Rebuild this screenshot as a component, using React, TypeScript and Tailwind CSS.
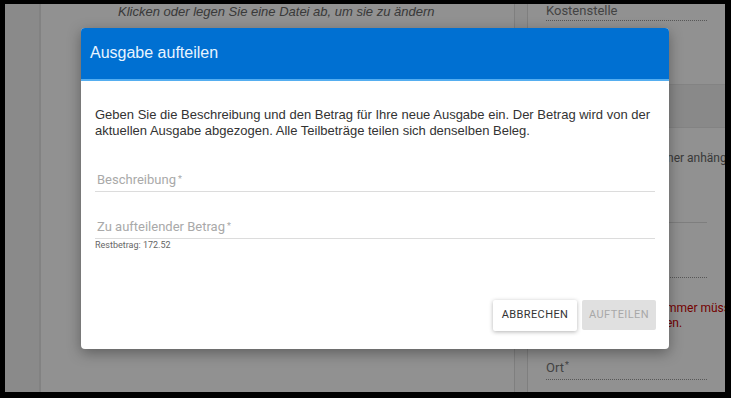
import React from 'react';

const sans = { fontFamily: '"Liberation Sans", Arial, sans-serif' };

const Field: React.FC<{ label: string; hint?: string }> = ({ label, hint }) => (
  <div className="flex flex-col">
    <div className="h-[21px] flex items-end pb-[2px] pl-[2px] border-b border-[#dcdcdc] text-[13px] text-[#a9a9a9] font-['Roboto',sans-serif]">
      <span>{label}</span>
      <span className="text-[9px] self-start mt-[2px] ml-[2px]">*</span>
    </div>
    {hint && <div className="text-[9px] text-[#666] mt-[2px] leading-none font-['Roboto',sans-serif]">{hint}</div>}
  </div>
);

export default function App() {
  return (
    <div className="w-[731px] h-[398px] bg-black pl-[5px] pt-[4px] pr-[6px] pb-[6px] overflow-hidden" style={sans}>
      <div className="relative w-full h-full bg-[#f7f7f7] flex overflow-hidden">
        {/* underlying page */}
        <div className="w-[36px] shrink-0 bg-[#f2f2f2] border-r-2 border-[#e4e4e4]" />
        <div className="w-[474px] shrink-0 bg-white border-r border-[#e0e0e0] pl-[77px] pt-[1px]">
          <div className="text-[13px] italic text-[#666] leading-none">Klicken oder legen Sie eine Datei ab, um sie zu ändern</div>
        </div>
        <div className="w-[13px] shrink-0 bg-[#fafafa] border-r border-[#e0e0e0]" />
        <div className="flex-1 min-w-0 overflow-hidden bg-white flex flex-col font-['Roboto',sans-serif]">
          <div className="mx-[18px] pb-[3px] text-[13px] text-[#777] border-b border-dotted border-[#999] leading-none">Kostenstelle</div>
          <div className="mt-[63px] h-[44px] bg-[#f1f1f1] border-y border-[#e6e6e6]" />
          <div className="mt-[21px] pl-[139px] text-[12px] text-[#666] whitespace-nowrap">ner anhängen</div>
          <div className="mt-[55px] mx-[18px] border-b border-[#ddd]" />
          <div className="mt-[54px] mx-[18px] border-b border-dotted border-[#999]" />
          <div className="mt-[23px] pl-[138px] text-[12px] text-[#c00] leading-[15px] whitespace-nowrap">
            <div>mmer müssen</div>
            <div>en.</div>
          </div>
          <div className="mt-[30px] mx-[18px] pb-[5px] text-[13px] text-[#777] border-b border-dotted border-[#999] leading-none">
            Ort<span className="text-[9px] align-top ml-[1px]">*</span>
          </div>
        </div>

        {/* overlay */}
        <div className="absolute inset-0 bg-black/[0.43]" />

        {/* dialog */}
        <div className="absolute left-[76px] top-[24px] w-[588px] h-[321px] bg-white rounded-[4px] shadow-[0_4px_14px_rgba(0,0,0,0.35)] flex flex-col overflow-hidden">
          <div className="h-[53px] shrink-0 bg-[#0070d2] border-b-2 border-[#55aef0] flex items-center pl-[9px] pb-[1px]">
            <span className="text-[16px] text-[#e8f4ff]">Ausgabe aufteilen</span>
          </div>
          <div className="flex-1 flex flex-col px-[14px] pt-[26px]">
            <p className="text-[13px] leading-[16px] text-[#333] whitespace-nowrap">
              Geben Sie die Beschreibung und den Betrag für Ihre neue Ausgabe ein. Der Betrag wird von der
              <br />
              aktuellen Ausgabe abgezogen. Alle Teilbeträge teilen sich denselben Beleg.
            </p>
            <div className="mt-[32px] w-[560px]">
              <Field label="Beschreibung" />
            </div>
            <div className="mt-[26px] w-[560px]">
              <Field label="Zu aufteilender Betrag" hint="Restbetrag: 172.52" />
            </div>
            <div className="flex-1" />
            <div className="flex justify-end gap-[5px] mb-[18px] font-['Roboto',sans-serif]">
              <button className="h-[31px] w-[84px] bg-white rounded-[2px] shadow-[0_1px_4px_rgba(0,0,0,0.3)] text-[11px] text-[#333] tracking-[0.4px]">
                ABBRECHEN
              </button>
              <button className="h-[30px] w-[74px] bg-[#e0e0e0] rounded-[2px] text-[11px] text-[#a8a8a8] tracking-[0.4px] mr-[-1px]">
                AUFTEILEN
              </button>
            </div>
          </div>
        </div>
      </div>
    </div>
  );
}
